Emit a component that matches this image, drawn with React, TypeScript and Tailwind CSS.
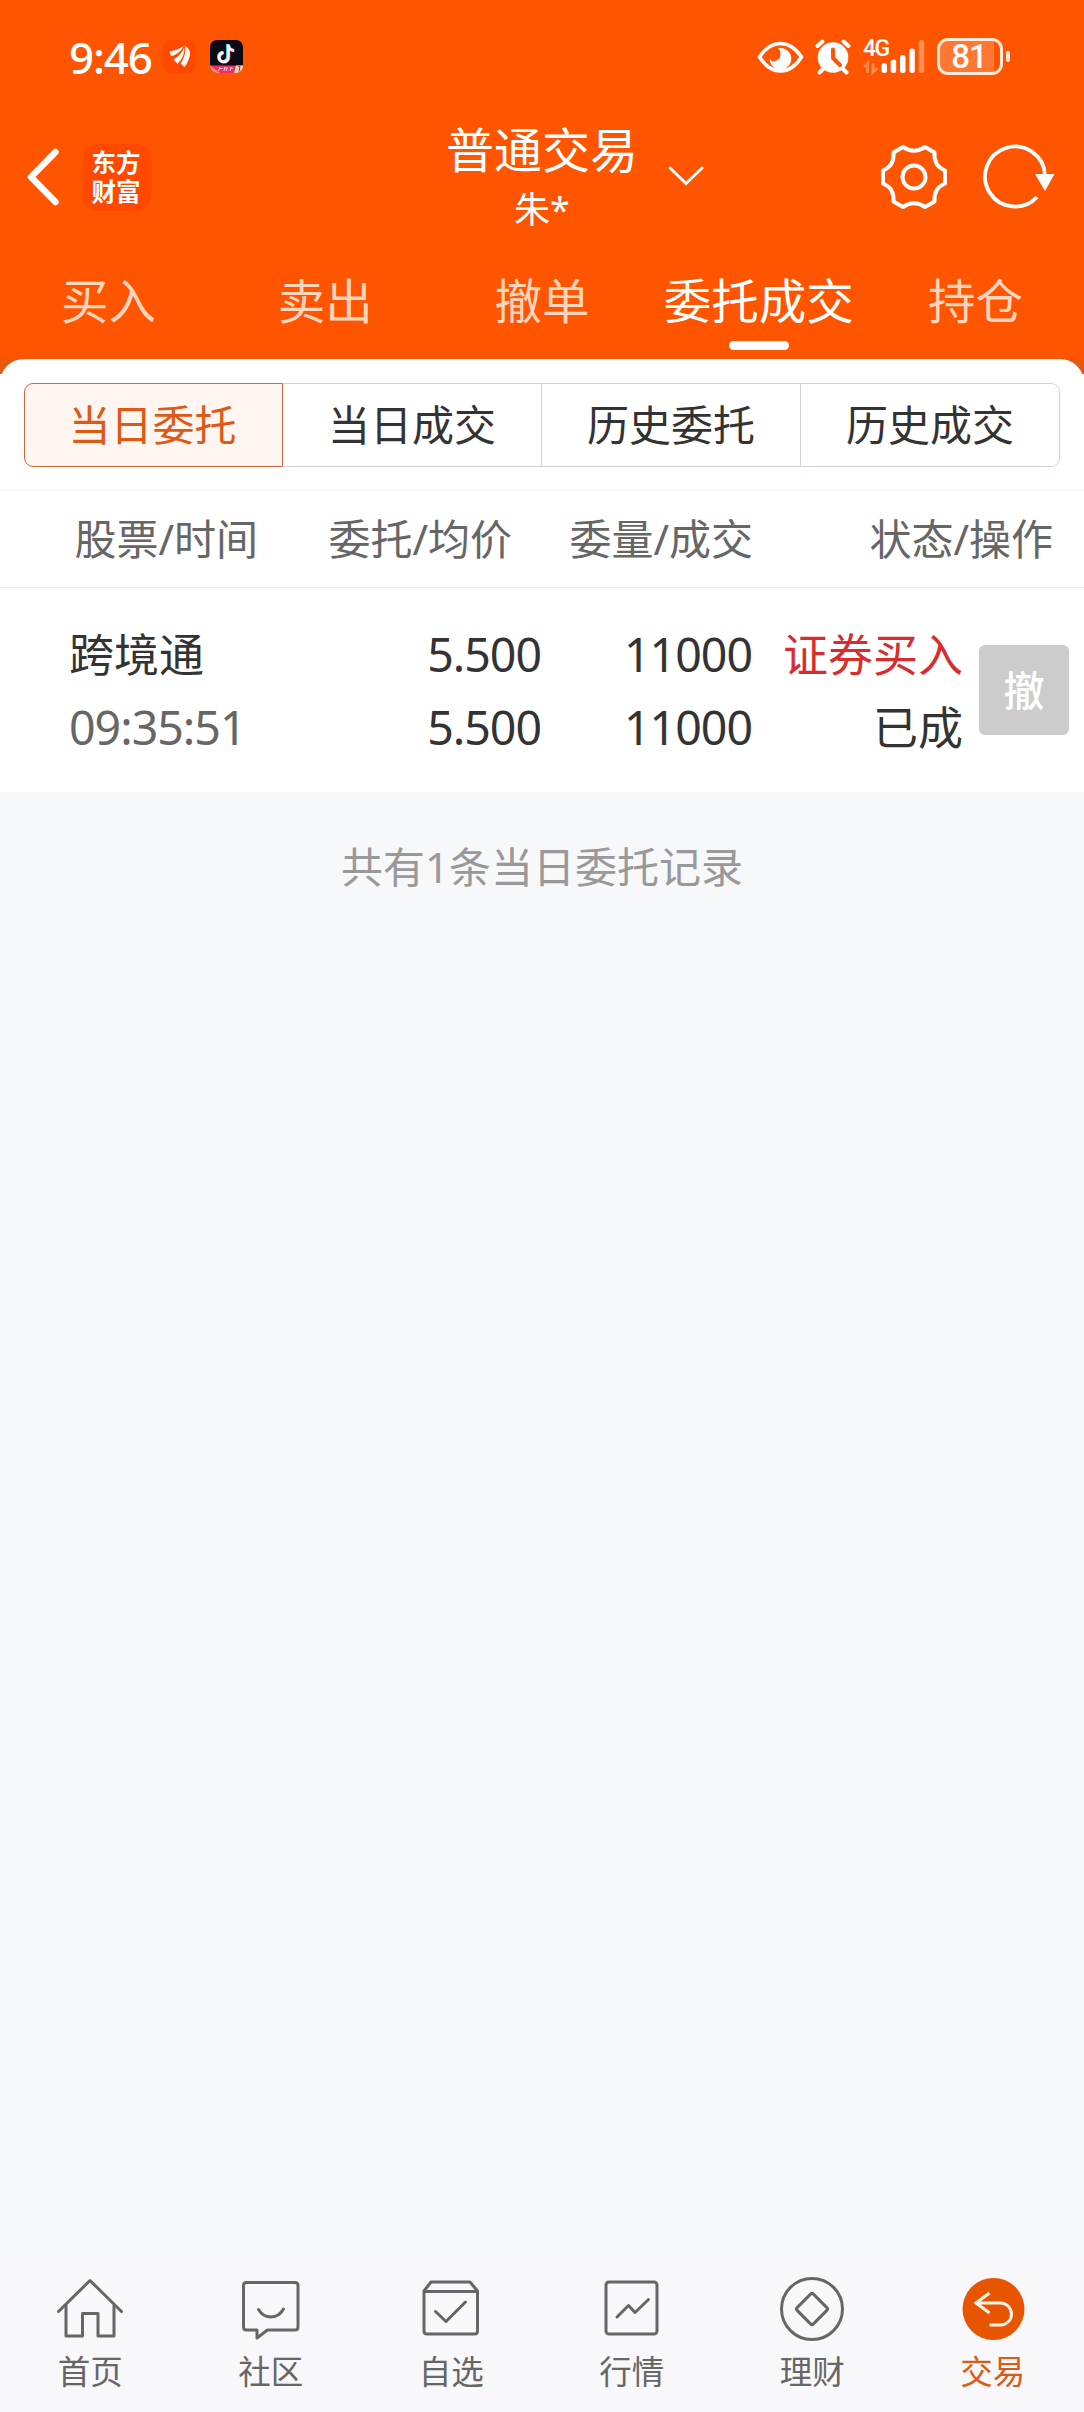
import type { ReactNode } from "react";

const tabs = ["买入", "卖出", "撤单", "委托成交", "持仓"];
const segments = ["当日委托", "当日成交", "历史委托", "历史成交"];

const orders = [
  {
    name: "跨境通",
    time: "09:35:51",
    price: "5.500",
    avgPrice: "5.500",
    amount: "11000",
    dealt: "11000",
    side: "证券买入",
    status: "已成",
  },
];

const StatusBar = () => {
  return (
    <div className="flex h-[113px] items-center pr-[74px] pl-[69px] text-white">
      <div className="w-[94px] text-[44px] leading-[44px] font-medium tracking-[-1.200px]">9:46</div>
      <svg className="h-[33px] w-[33px]" viewBox="0 0 33 33">
        <rect width="33" height="33" rx="8" fill="#ff4800" />
        <g fill="#fff8ee">
          <path d="M6.600 11.500 Q15 10 21.500 5.500 Q17 14 8 16.300 Z" />
          <path d="M10.500 19.500 Q19 14.500 21.500 6 Q23 15 14.500 24 Z" />
          <path d="M21.500 5.500 Q27.500 8.500 27 14.500 Q26.500 20 21.500 27 L17.500 23.500 Q23.500 14 21.500 5.500 Z" />
        </g>
        <path d="M9 18.300 Q18 14.500 20.800 6.500 M16 25 Q23 15 21.500 6" fill="none" stroke="#ff4800" strokeWidth=".8" />
      </svg>
      <svg className="ml-[14px] h-[33px] w-[33px]" viewBox="0 0 33 33">
        <clipPath id="appClip">
          <rect width="33" height="33" rx="7" />
        </clipPath>
        <g clipPath="url(#appClip)">
          <rect width="33" height="33" fill="#0b0a14" />
          <g fill="none" strokeWidth="2.800">
            <path d="M17.500 4 V16.500 A4.600 4.600 0 1 1 12.900 12.200 M17.500 5 Q18.500 9.500 23 10" stroke="#35e6e6" />
            <path d="M19 5 V17.500 A4.600 4.600 0 1 1 14.200 13.200 M19 6 Q20 10.500 24.500 11" stroke="#f5305d" />
            <path d="M18.300 4.500 V17 A4.600 4.600 0 1 1 13.500 12.700 M18.300 5.500 Q19.300 10 23.800 10.500" stroke="#fff" />
          </g>
          <rect y="25.500" width="33" height="8" fill="#ee2e63" />
          <path d="M0 25.500 L10 33 H0 Z" fill="#f58a6d" />
          <path d="M26 25.500 H33 V33 H24 Z" fill="#ffd9b0" />
          <path d="M8.500 31 l1.500 -4 M9 28.500 h3.500 M14 31 l.8 -4 M14 28 h4 M16 31 l1.500 -3 M20 31 l1 -4 M20 28 h3" stroke="#ffd6de" strokeWidth="1" />
          <path d="M28.500 26.500 h1.500 l-1 5" fill="none" stroke="#7c3a35" strokeWidth="1" />
        </g>
      </svg>
      <div className="ml-auto flex items-center">
        <svg className="h-[36px] w-[48px]" viewBox="0 0 48 36">
          <path d="M2.500 18 Q11.500 4.500 23.500 4.500 Q35.500 4.500 44.500 18 Q35.500 32 23.500 32 Q11.500 32 2.500 18 Z" fill="none" stroke="#fff" strokeWidth="3.600" strokeLinejoin="round" />
          <path d="M21 9.300 A10.800 10.800 0 1 1 12.700 19 Q14 23.500 18.500 22 Q24 20 23.500 14 Q23 10.500 21 9.300 Z" fill="#fff" />
        </svg>
        <svg className="ml-[10px] h-[36px] w-[36px]" viewBox="0 0 36 36">
          <circle cx="18" cy="18.500" r="15.300" fill="#fff" />
          <path d="M2.500 7 L7.500 2.500 M28.500 2.500 L33.500 7" stroke="#fff" strokeWidth="4" strokeLinecap="round" />
          <path d="M8 30 L4.500 33.500 M28 30 L31.500 33.500" stroke="#fff" strokeWidth="4" strokeLinecap="round" />
          <path d="M18 10.500 V19 L25 26" fill="none" stroke="#ff5500" strokeWidth="4" strokeLinecap="round" strokeLinejoin="round" />
        </svg>
        <div className="relative ml-[12px] h-[36px] w-[64px]">
          <span className="absolute top-[-2px] left-0 font-[Roboto] text-[23px] leading-[23px] font-medium tracking-[-1.500px]">4G</span>
          <svg className="h-[36px] w-[64px]" viewBox="0 0 64 36">
            <g fill="#fff">
              <rect x="18.500" y="24" width="5.500" height="10" rx="2.500" />
              <rect x="27.700" y="20.500" width="5.500" height="13.500" rx="2.500" />
              <rect x="37" y="16" width="5.500" height="18" rx="2.500" />
              <rect x="46.300" y="9.500" width="5.500" height="24.500" rx="2.500" />
              <rect x="55.700" y="1" width="5.500" height="33" rx="2.500" fillOpacity=".35" />
            </g>
            <path d="M1 28 L4.500 24.500 V34 M10 24 V33 L14.500 29" fill="none" stroke="#fff" strokeOpacity=".3" strokeWidth="3" />
          </svg>
        </div>
        <div className="ml-[10px] flex h-[37px] w-[66px] rounded-[11px] border-[3px] border-[#ffeadb]">
          <div className="flex w-[54px] items-center justify-center rounded-l-[8px] bg-white/20 pl-[4px] font-[Roboto] text-[33px] leading-[31px] font-medium tracking-[-1px]">
            81
          </div>
        </div>
        <div className="ml-[3px] h-[11px] w-[4px] rounded-[2px] bg-[#ffeadb]" />
      </div>
    </div>
  );
};

const TitleBar = () => {
  return (
    <div className="grid h-[128px] grid-cols-[1fr_auto_1fr] items-center text-white">
      <div className="flex items-center pl-[26px]">
        <svg className="h-[58px] w-[34px]" viewBox="0 0 34 58">
          <path d="M29.500 4 L5 29 L29.500 54" fill="none" stroke="#fff" strokeWidth="6.500" strokeLinecap="round" strokeLinejoin="round" />
        </svg>
        <div className="ml-[23px] flex h-[67px] w-[68px] flex-col items-center justify-center rounded-[14px] bg-[#ff4800] pr-[2px] text-[24.500px] leading-[29px] font-bold">
          <span>东方</span>
          <span>财富</span>
        </div>
      </div>
      <div className="flex flex-col items-center pt-[3px]">
        <div className="text-[48px] leading-[62px]">普通交易</div>
        <div className="text-[36px] leading-[57px]">朱*</div>
      </div>
      <div className="flex items-center pr-[28px] pl-[29px]">
        <svg className="h-[24px] w-[38px]" viewBox="0 0 38 24">
          <path d="M3 3 L19 18.500 L35 3" fill="none" stroke="#fff" strokeWidth="3" strokeLinecap="round" />
        </svg>
        <svg className="ml-auto h-[70px] w-[70px]" viewBox="0 0 70 70">
          <path
            d="M24 5 Q35 12.500 46 5 L55.500 10.500 Q54.500 24 66 28.500 V41.500 Q54.500 46 55.500 59.500 L46 65 Q35 57.500 24 65 L14.500 59.500 Q15.500 46 4 41.500 V28.500 Q15.500 24 14.500 10.500 Z"
            fill="none"
            stroke="#fff"
            strokeWidth="4"
            strokeLinejoin="round"
          />
          <circle cx="35" cy="35" r="11.500" fill="none" stroke="#fff" strokeWidth="4" />
        </svg>
        <svg className="ml-[31px] h-[70px] w-[76px]" viewBox="0 0 76 70">
          <path d="M57 55 A30 30 0 1 1 65 33" fill="none" stroke="#fff" strokeWidth="3.800" />
          <path d="M55 32 H74.500 L65 49 Z" fill="#fff" />
        </svg>
      </div>
    </div>
  );
};

const Segments = () => {
  return (
    <div className="grid h-[84px] grid-cols-4 text-[42px] leading-[82px] text-[#333]">
      {segments.map((label, i) => (
        <div
          key={label}
          className={
            i === 0
              ? "rounded-l-[9px] border border-[#cc6a3a] bg-[#fff5f1] pr-[2px] text-center text-[#dd5a14]"
              : "border border-l-0 border-[#d0d4d9] text-center last:rounded-r-[9px]"
          }
        >
          {label}
        </div>
      ))}
    </div>
  );
};

const NavItem = ({ label, active, children }: { label: string; active?: boolean; children: ReactNode }) => {
  return (
    <div className={active ? "flex flex-col items-center text-[#dd5a14]" : "flex flex-col items-center text-[#666]"}>
      <svg className="h-[70px] w-[70px]" viewBox="0 0 70 70" fill="none" stroke="currentColor" strokeWidth="3" strokeLinejoin="round">
        {children}
      </svg>
      <div className="mt-[7px] text-[32.500px] leading-[44px]">{label}</div>
    </div>
  );
};

const BottomNav = () => {
  return (
    <div className="grid h-[154px] grid-cols-6 bg-[#f8f8fa] pt-[15px] pr-px">
      <NavItem label="首页">
        <path d="M3.500 38.500 L35 7.500 L66.500 38.500" strokeLinecap="round" />
        <path d="M11 32 V63 H27.500 V40.500 H43 V63 H59 V32" />
      </NavItem>
      <NavItem label="社区">
        <path d="M10.500 9.500 H59 Q62 9.500 62 12.500 V54 Q62 57 59 57 H31.500 L21 65 V57 H10.500 Q7.500 57 7.500 54 V12.500 Q7.500 9.500 10.500 9.500 Z" />
        <path d="M22.500 36.500 Q27 44 34.800 44 Q43 44 47.500 36" strokeLinecap="round" />
      </NavItem>
      <NavItem label="自选">
        <path d="M8 18 L15 9 H54 L61.500 18 V58 Q61.500 61 58.500 61 H11 Q8 61 8 58 Z M8 18.500 H61.500" />
        <path d="M19.500 38.500 L30 48.500 L49.500 29" strokeLinecap="round" />
      </NavItem>
      <NavItem label="行情">
        <rect x="9" y="9" width="51" height="52" rx="3" />
        <path d="M20 44 L31.500 32.500 L38 39.500 L51.500 26.500" strokeLinecap="round" />
      </NavItem>
      <NavItem label="理财">
        <circle cx="35" cy="36" r="30.500" />
        <rect x="23.500" y="24.500" width="23" height="23" rx="2" transform="rotate(45 35 36)" />
      </NavItem>
      <NavItem label="交易" active>
        <circle cx="35.500" cy="36" r="31" fill="#e85500" stroke="none" />
        <path d="M31.500 20 L18 30 L31.500 40 M18 30 H42.500 A11 11 0 0 1 42.500 52 H31.500" stroke="#fff3e4" strokeLinejoin="miter" />
      </NavItem>
    </div>
  );
};

const App = () => {
  return (
    <div className="flex h-[2412px] w-[1084px] flex-col overflow-hidden bg-[#f7f8fa] font-['Noto_Sans','Noto_Sans_CJK_SC',sans-serif]">
      <div className="h-[359px] bg-[#ff5500]">
        <StatusBar />
        <TitleBar />
        <div className="grid h-[118px] grid-cols-5 text-[47.500px] leading-[120px]">
          {tabs.map((tab) => (
            <div
              key={tab}
              className={
                tab === "委托成交" ? "relative text-center whitespace-nowrap text-white" : "text-center text-[#ffd6bd]"
              }
            >
              {tab}
              {tab === "委托成交" && (
                <div className="absolute top-[100px] left-1/2 h-[9px] w-[60px] -translate-x-1/2 rounded-full bg-white" />
              )}
            </div>
          ))}
        </div>
      </div>
      <div className="bg-linear-to-b from-[#e65a10] from-[15px] to-white to-[15px]">
        <div className="rounded-t-[24px] bg-white px-[24px] pt-[24px] pb-[23px]">
          <Segments />
        </div>
      </div>
      <div className="flex h-[98px] border-t border-b border-t-[#f7f7f7] border-b-[#ebebeb] bg-white text-[42px] leading-[96px] text-[#666]">
        <div className="w-[258px] text-right">股票/时间</div>
        <div className="w-[254px] text-right">委托/均价</div>
        <div className="w-[241px] text-right">委量/成交</div>
        <div className="w-[300px] text-right">状态/操作</div>
      </div>
      {orders.map((order) => (
        <div key={order.time} className="flex h-[204px] items-center bg-white text-[46.500px] leading-[73px] tracking-[-1px] text-[#333]">
          <div className="w-[260px] pt-px pl-[69px]">
            <div className="text-[45px] tracking-normal">{order.name}</div>
            <div className="text-[#666]">{order.time}</div>
          </div>
          <div className="w-[281px] pt-[2px] text-right">
            <div>{order.price}</div>
            <div>{order.avgPrice}</div>
          </div>
          <div className="w-[211px] pt-[2px] text-right">
            <div>{order.amount}</div>
            <div>{order.dealt}</div>
          </div>
          <div className="w-[211px] pt-px text-right text-[45px] tracking-normal">
            <div className="text-[#d92c2c]">{order.side}</div>
            <div>{order.status}</div>
          </div>
          <button className="ml-[16px] h-[90px] w-[90px] rounded-[6px] bg-[#ccc] text-[41px] leading-[90px] font-medium tracking-normal text-white">
            撤
          </button>
        </div>
      ))}
      <div className="pt-[43px] text-center text-[42px] leading-[64px] text-[#999]">共有{orders.length}条当日委托记录</div>
      <div className="flex-1" />
      <BottomNav />
    </div>
  );
};

export default App;
